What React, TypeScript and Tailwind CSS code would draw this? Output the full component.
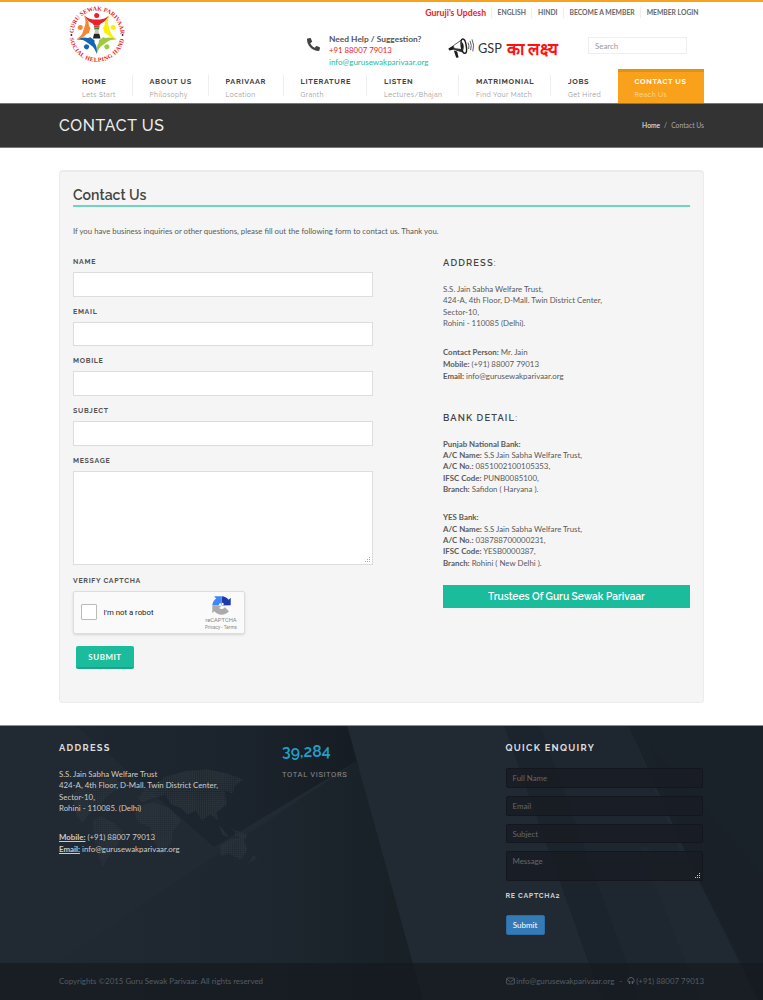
import React from "react";
import { FaPhone } from "react-icons/fa";

const NAV = [
  { t: "HOME", s: "Lets Start", w: "w-[50.5px] pl-0" },
  { t: "ABOUT US", s: "Philosophy", w: "w-[76px] pl-[17px]" },
  { t: "PARIVAAR", s: "Location", w: "w-[75px] pl-[17px]" },
  { t: "LITERATURE", s: "Granth", w: "w-[83.5px] pl-[17px]" },
  { t: "LISTEN", s: "Lectures/Bhajan", w: "w-[92px] pl-[17px]" },
  { t: "MATRIMONIAL", s: "Find Your Match", w: "w-[92px] pl-[17px]" },
  { t: "JOBS", s: "Get Hired", w: "w-[60px] pl-[17px]" },
];

const FIGURES = [
  { c: "#e8222b", a: 0 },
  { c: "#fdf100", a: 72 },
  { c: "#9ccb3b", a: 144 },
  { c: "#1565b4", a: 216 },
  { c: "#f58634", a: 288 },
];

function Logo() {
  return (
    <svg className="h-[60px] w-[60px] shrink-0" viewBox="-30 -30 60 60">
      <defs>
        <path id="arcTop" d="M-23 4.2A23.4 23.4 0 1 1 23 4.2" />
        <path id="arcBottom" d="M-27.4 2.6A27.5 27.5 0 0 0 27.4 2.6" />
      </defs>
      <g fill="#e5242c" fontFamily="'Liberation Serif', serif" fontWeight="700" fontSize="6">
        <text>
          <textPath href="#arcTop" startOffset="5" textLength="73">GURU SEWAK PARIVAAR</textPath>
        </text>
        <text>
          <textPath href="#arcBottom" startOffset="1.5" textLength="77">SOCIAL HELPING HAND</textPath>
        </text>
      </g>
      <circle cx="-25.6" cy="1" r="0.9" fill="#222" />
      <circle cx="25.6" cy="1" r="0.9" fill="#222" />
      <g transform="translate(-0.3 -1.2)">
        {FIGURES.map((f) => (
          <g key={f.a} transform={`rotate(${f.a})`} fill={f.c}>
            <circle cx="0" cy="-17.3" r="2.5" />
            <path d="M-12.4-17.2Q-7-13-3-13.4H3Q7-13 12.4-17.2 9-11 4.2-9.4L2.6-7.4H-2.6L-4.2-9.4Q-9-11-12.4-17.2Z" />
          </g>
        ))}
        <path d="M-2.6-7.4H2.6L3-5.2H-3Z" fill="#c34a36" />
        <path d="M-2.4-5.2H2.4V-3.2H-2.4Z" fill="#3f7d3a" />
        <path d="M-1.8-3.2H1.8L2.2 1H-2.2Z" fill="#c9c2b4" />
        <path d="M-2.6 1H2.6L3.8 5.6H-3.8Z" fill="#23282b" />
      </g>
    </svg>
  );
}

function Megaphone() {
  return (
    <svg className="h-[22px] w-[28px] shrink-0" viewBox="0 0 28 22">
      <path d="M0.4 11.6 5.4 8.4 6.4 12.6 1.2 13.6Z" fill="#1d1d1d" />
      <path d="M5.4 8.6 14 2.6 16 15.4 6.4 12.6Z" fill="#fff" stroke="#333" strokeWidth="0.8" />
      <path d="M5.4 11 15.4 12.2 15.8 15.4 6.4 12.8Z" fill="#333" />
      <ellipse cx="15.8" cy="9.2" rx="2.5" ry="7.2" transform="rotate(-9 15.8 9.2)" fill="#fff" stroke="#1d1d1d" strokeWidth="1.5" />
      <path d="M13.6 4.6Q17 8.4 15 14 12.6 9.6 13.6 4.6Z" fill="#1d1d1d" />
      <path d="M5.8 13.4 9.2 14.4 10.6 20.6 8.2 20.8Z" fill="#1d1d1d" />
      <path d="M20 5.6Q21.6 8.8 20.6 12M22 3.8Q24.2 8.4 22.6 13.2M24 2.4Q26.8 8 24.8 14.4" fill="none" stroke="#333" strokeWidth="0.8" />
    </svg>
  );
}

function Recaptcha() {
  return (
    <svg className="h-[19px] w-[19px]" viewBox="0 0 64 64">
      <path d="M63 31V6l-7 7A31 31 0 0 0 32 1v21a11 11 0 0 1 9 6l-8 4Z" fill="#1c3aa9" />
      <path d="M31 1H7l7 7A31 31 0 0 0 1 32h21a14 14 0 0 1 6-9l5 9Z" fill="#4285f4" />
      <path d="M1 33v25l7-7a31 31 0 0 0 49 0L43 38a12 12 0 0 1-19 2l9-7Z" fill="#ababab" />
    </svg>
  );
}

function Grip({ color }: { color: string }) {
  return (
    <svg className="absolute bottom-px right-px h-[6px] w-[6px]" viewBox="0 0 6 6" fill={color}>
      <path d="M4 0h1v1H4zM2 2h1v1H2zM4 2h1v1H4zM0 4h1v1H0zM2 4h1v1H2zM4 4h1v1H4z" />
    </svg>
  );
}

const LAND = [
  "M70 30 80 22 96 16 112 14 118 22 104 32 96 42 86 50 80 58 74 50Z",
  "M90 56 98 52 110 58 119 66 114 80 106 90 100 100 96 92 92 76Z",
  "M134 34 140 26 150 20 158 16 164 24 158 32 148 34 138 38Z",
  "M134 42 150 38 164 44 176 56 168 66 166 78 156 90 150 76 146 62 134 58 131 50Z",
  "M158 14 180 8 200 6 220 10 236 16 228 22 226 30 218 26 220 40 210 48 212 56 204 50 196 56 190 46 182 50 176 44 166 40 160 30Z",
  "M214 80 224 74 236 72 240 84 234 94 222 88 214 90Z",
  "M212 60 218 66 222 72 216 70ZM226 64 240 70 238 74 228 70ZM246 90 250 92 240 98Z",
];

function FooterArt() {
  return (
    <svg className="absolute inset-0 h-full w-full" viewBox="0 0 763 275" preserveAspectRatio="none">
      <defs>
        <linearGradient id="ga" x1="0" y1="0" x2="1" y2="0">
          <stop offset="0" stopColor="#1e262f" />
          <stop offset="0.6" stopColor="#1b232c" />
          <stop offset="1" stopColor="#161c23" />
        </linearGradient>
        <linearGradient id="gb" x1="0" y1="0" x2="1" y2="0">
          <stop offset="0" stopColor="#212932" />
          <stop offset="0.6" stopColor="#1e262f" />
          <stop offset="1" stopColor="#182026" />
        </linearGradient>
        <pattern id="dots" width="2" height="2" patternUnits="userSpaceOnUse">
          <rect width="1.5" height="1.5" fill="#2b333b" />
        </pattern>
      </defs>
      <rect width="763" height="275" fill="#212932" />
      <path d="M75 0H347L357 36 214 122Z" fill="url(#ga)" />
      <path d="M357 36 423 275H0Z" fill="url(#gb)" />
      <path d="M504 0H540L640 275H602Z" fill="#1b232c" />
      <path d="M540 0H628L740 275H640Z" fill="#1e262f" />
      <path d="M628 0H763V275H758L692 142Z" fill="#1a2229" />
      <path d="M692 142 758 275H700L640 120Z" fill="#202831" />
      <path d="M763 150V275L692 142 650 20Z" fill="#192028" />
      <g fill="url(#dots)" transform="translate(0 38) scale(1.03)">
        {LAND.map((d) => (
          <path key={d} d={d} />
        ))}
      </g>
    </svg>
  );
}

function Label({ children }: { children: React.ReactNode }) {
  return <div className="h-[17px] font-['Raleway',Lato,sans-serif] text-[7px] font-bold leading-[13px] tracking-[0.68px] text-[#555]">{children}</div>;
}

function Field({ label }: { label: string }) {
  return (
    <div className="h-[49.7px]">
      <Label>{label}</Label>
      <input className="block h-[24.5px] w-[300px] border-[1.5px] border-[#ddd] bg-white" />
    </div>
  );
}

function Head({ children }: { children: React.ReactNode }) {
  return <h4 className="h-[12px] font-['Raleway',Lato,sans-serif] text-[9.3px] font-semibold leading-[13px] tracking-[1.15px] text-[#444]">{children}</h4>;
}

function FooterHead({ children }: { children: React.ReactNode }) {
  return <h4 className="h-[12px] font-['Raleway',Lato,sans-serif] text-[9.3px] font-bold leading-[13px] tracking-[1.3px] text-[#ddd]">{children}</h4>;
}

const BANKS = [
  { n: "Punjab National Bank:", a: "0851002100105353,", i: "PUNB0085100,", b: "Safidon ( Haryana )." },
  { n: "YES Bank:", a: "038788700000231,", i: "YESB0000387,", b: "Rohini ( New Delhi )." },
];

export default function App() {
  return (
    <div className="h-[1000px] w-[763px] overflow-hidden whitespace-nowrap bg-white font-[Lato,sans-serif] text-[7.87px] leading-[11.3px] text-[#5a5a5a]">
      <header className="h-[103px] border-t-2 border-[#f9a11b] px-[59px]">
        <div className="flex h-[67px] w-[645px]">
          <div className="w-[207px] pl-[8px] pt-[2px]">
            <Logo />
          </div>
          <div className="flex-1">
            <nav className="flex h-[21px] items-center justify-end pr-[5.5px] text-[6.76px] font-bold text-[#666]">
              <a className="mr-[5px] pt-px text-[8.7px] text-[#ec1c24]">Guruji's Updesh</a>
              <a className="border-l border-[#eee] px-[5.5px]">ENGLISH</a>
              <a className="border-l border-[#eee] px-[5.5px]">HINDI</a>
              <a className="border-l border-[#eee] px-[5.5px]">BECOME A MEMBER</a>
              <a className="border-l border-[#eee] pl-[5.5px]">MEMBER LOGIN</a>
            </nav>
            <div className="flex h-[46px] pl-[41px] pt-px">
              <FaPhone className="mt-[14px] h-[13px] w-[13px] -scale-x-100 text-[#444]" />
              <div className="ml-[9px] w-[119px] pt-[9px]">
                <div className="text-[8.4px] font-bold leading-[12px] text-[#555]">Need Help / Suggestion?</div>
                <div className="text-[7.8px] leading-[11.5px] text-[#ec1c24]">+91 88007 79013</div>
                <div className="text-[8px] leading-[11.5px] text-[#1abc9c]">info@gurusewakparivaar.org</div>
              </div>
              <div className="flex w-[140px] items-start pt-[13px]">
                <Megaphone />
                <span className="ml-[2px] mt-[3px] text-[12.7px] leading-[16px] text-[#333]">GSP</span>
                <span className="ml-[5px] mt-[4px] text-[17px] font-semibold leading-[16px] text-[#f11]">का लक्ष्य</span>
              </div>
              <input placeholder="Search" className="mt-[13px] h-[17px] w-[99px] border-[1.5px] border-[#eee] px-[6px] text-[7.9px] placeholder:text-[#999]" />
            </div>
          </div>
        </div>
        <nav className="flex h-[34px] w-[645px] justify-between pl-[23px] font-['Raleway',Lato,sans-serif]">
          <div className="flex">
            {NAV.map((n) => (
              <div key={n.t} className={`${n.w} mt-[6px] h-[21px] shrink-0 border-r border-[#eee] last:border-0`}>
                <div className="text-[7.35px] font-bold leading-[13px] tracking-[0.65px] text-[#444]">{n.t}</div>
                <div className="text-[6.7px] leading-[14px] tracking-[0.42px] text-[#999]">{n.s}</div>
              </div>
            ))}
          </div>
          <div className="h-[34px] w-[86px] border-t-[3px] border-[#e0911a] bg-[#f9a11b] pl-[16.5px] pt-[3px] text-white">
            <div className="text-[7.35px] font-bold leading-[13px] tracking-[0.6px]">CONTACT US</div>
            <div className="text-[6.7px] leading-[14px] tracking-[0.42px] text-[#fde0b3]">Reach Us</div>
          </div>
        </nav>
      </header>

      <section className="flex h-[45px] items-center justify-between border-y border-[#777] bg-[#333] px-[59px]">
        <h1 className="pt-px font-['Raleway',Lato,sans-serif] text-[15.8px] font-medium leading-[20px] tracking-[0.65px] text-[#eee]">CONTACT US</h1>
        <div className="text-[6.76px] text-[#aaa]">
          <span className="text-[#eee]">Home</span>
          <span className="mx-[4px]">/</span>Contact Us
        </div>
      </section>

      <main className="h-[577px] px-[59px] pt-[22px]">
        <div className="h-[533px] w-[645px] rounded border border-t-2 border-[#ebebeb] bg-[#f5f5f5] px-[13px] pt-[13px]">
          <h2 className="h-[22px] border-b-2 border-[#6fd3c0] font-['Raleway',Lato,sans-serif] text-[14.1px] font-semibold leading-[20px] text-[#444]">Contact Us</h2>
          <p className="mt-[18px] text-[7.81px] leading-[12px]">
            If you have business inquiries or other questions, please fill out the following form to contact us. Thank you.
          </p>
          <div className="flex">
            <form className="w-[370px] pt-[18px]">
              <Field label="NAME" />
              <Field label="EMAIL" />
              <Field label="MOBILE" />
              <Field label="SUBJECT" />
              <Label>MESSAGE</Label>
              <div className="relative h-[94px] w-[300px] border-[1.5px] border-[#ddd] bg-white">
                <Grip color="#aaa" />
              </div>
              <div className="mt-[9px]">
                <Label>VERIFY CAPTCHA</Label>
              </div>
              <div className="flex h-[43px] w-[172px] items-center rounded-[2px] border border-[#ddd] bg-[#fafafa] pl-[7px] shadow-sm">
                <div className="h-[16px] w-[16px] rounded-[1px] border border-[#bbb] bg-white" />
                <span className="ml-[6.5px] w-[95.5px] font-['Roboto',sans-serif] text-[7.8px] text-[#222]">I'm not a robot</span>
                <div className="flex w-[44px] flex-col items-center pt-[2px] font-['Roboto',sans-serif] text-[#888]">
                  <Recaptcha />
                  <span className="mt-[1px] text-[5.8px] leading-[8px]">reCAPTCHA</span>
                  <span className="text-[4.7px] leading-[7px]">Privacy - Terms</span>
                </div>
              </div>
              <button type="button" className="ml-[3px] mt-[12px] block h-[23px] w-[58px] rounded-[2px] border-b-2 border-[#1aa589] bg-[#1abc9c] pt-px text-[7.9px] font-bold leading-[20px] tracking-[0.56px] text-white">
                SUBMIT
              </button>
            </form>
            <aside className="w-[247px] pt-[19px]">
              <Head>
                ADDRESS<span className="font-normal">:</span>
              </Head>
              <p className="mt-[16px]">
                S.S. Jain Sabha Welfare Trust,
                <br />
                424-A, 4th Floor, D-Mall. Twin District Center,
                <br />
                Sector-10,
                <br />
                Rohini - 110085 (Delhi).
              </p>
              <p className="mb-[29px] mt-[16.5px] leading-[12px]">
                <b>Contact Person:</b> Mr. Jain
                <br />
                <b>Mobile:</b> (+91) 88007 79013
                <br />
                <b>Email:</b> info@gurusewakparivaar.org
              </p>
              <Head>
                BANK DETAIL<span className="font-normal">:</span>
              </Head>
              {BANKS.map((k) => (
                <p key={k.n} className="mt-[16px] last-of-type:mt-[17.2px]">
                  <b>{k.n}</b>
                  <br />
                  <b>A/C Name:</b> S.S Jain Sabha Welfare Trust,
                  <br />
                  <b>A/C No.:</b> {k.a}
                  <br />
                  <b>IFSC Code:</b> {k.i}
                  <br />
                  <b>Branch:</b> {k.b}
                </p>
              ))}
              <div className="mt-[16px] h-[23px] bg-[#1abc9c] text-center font-['Raleway',Lato,sans-serif] text-[10.2px] font-semibold leading-[22px] text-white">
                Trustees Of Guru Sewak Parivaar
              </div>
            </aside>
          </div>
        </div>
      </main>

      <footer className="relative h-[275px] text-[#ccc]">
        <FooterArt />
        <div className="relative flex h-[238px] border-t border-[#8b9090] pl-[59px] pt-[15px]">
          <div className="w-[223px]">
            <FooterHead>ADDRESS</FooterHead>
            <p className="mt-[16px]">
              S.S. Jain Sabha Welfare Trust
              <br />
              424-A, 4th Floor, D-Mall. Twin District Center,
              <br />
              Sector-10,
              <br />
              Rohini - 110085. (Delhi)
            </p>
            <p className="mt-[16.5px] leading-[12px]">
              <b className="underline">Mobile:</b> (+91) 88007 79013
              <br />
              <b className="underline">Email:</b> info@gurusewakparivaar.org
            </p>
          </div>
          <div className="w-[223.5px] pt-px">
            <div className="font-['Raleway',Lato,sans-serif] text-[15.8px] font-semibold leading-[20px] text-[#1fa0c8]">39,284</div>
            <div className="mt-[7px] font-['Roboto',Lato,sans-serif] text-[7.6px] tracking-[0.6px] text-[#8c8c8c]">TOTAL VISITORS</div>
          </div>
          <div className="w-[197.5px]">
            <FooterHead>QUICK ENQUIRY</FooterHead>
            <div className="mt-[15px] flex flex-col gap-[8px] text-[#666]">
              <div className="h-[19.8px] rounded-[2px] border border-black/20 bg-[#181c23]/80 px-[6px] leading-[18px]">Full Name</div>
              <div className="h-[19.8px] rounded-[2px] border border-black/20 bg-[#181c23]/80 px-[6px] leading-[18px]">Email</div>
              <div className="h-[19.8px] rounded-[2px] border border-black/20 bg-[#181c23]/80 px-[6px] leading-[18px]">Subject</div>
              <div className="relative h-[30px] rounded-[2px] border border-black/20 bg-[#181c23]/80 px-[6px] leading-[18px]">
                Message
                <Grip color="#ccc" />
              </div>
            </div>
            <div className="mt-[9px] font-['Raleway',Lato,sans-serif] text-[7px] font-bold leading-[12px] tracking-[0.68px] text-[#ccc]">RE CAPTCHA2</div>
            <button type="button" className="mt-[13px] block h-[20px] w-[39px] rounded-[2px] border border-[#2e6da4] bg-[#337ab7] text-[8px] leading-[18px] text-white">Submit</button>
          </div>
        </div>
        <div className="relative flex h-[37px] items-center justify-between bg-[#14181d]/65 px-[59px] text-[7.9px] text-[#555c63]">
          <span>Copyrights ©2015 Guru Sewak Parivaar. All rights reserved</span>
          <span className="flex items-center">
            <svg className="mr-px h-[8px] w-[9px]" viewBox="0 0 9 8" fill="none" stroke="currentColor" strokeWidth="0.9">
              <rect x="0.6" y="1" width="7.8" height="6" rx="0.8" />
              <path d="M1 2.2 4.5 5 8 2.2" />
            </svg>
            info@gurusewakparivaar.org
            <span className="mx-[5px]">-</span>
            <svg className="mr-px h-[8px] w-[8px]" viewBox="0 0 8 8" fill="none" stroke="currentColor" strokeWidth="1">
              <path d="M1.6 5.6A3.1 3.1 0 1 1 6.4 5.6" />
              <path d="M2.6 4v3M5.4 4v3" strokeWidth="1.3" />
            </svg>
            (+91) 88007 79013
          </span>
        </div>
      </footer>
    </div>
  );
}
